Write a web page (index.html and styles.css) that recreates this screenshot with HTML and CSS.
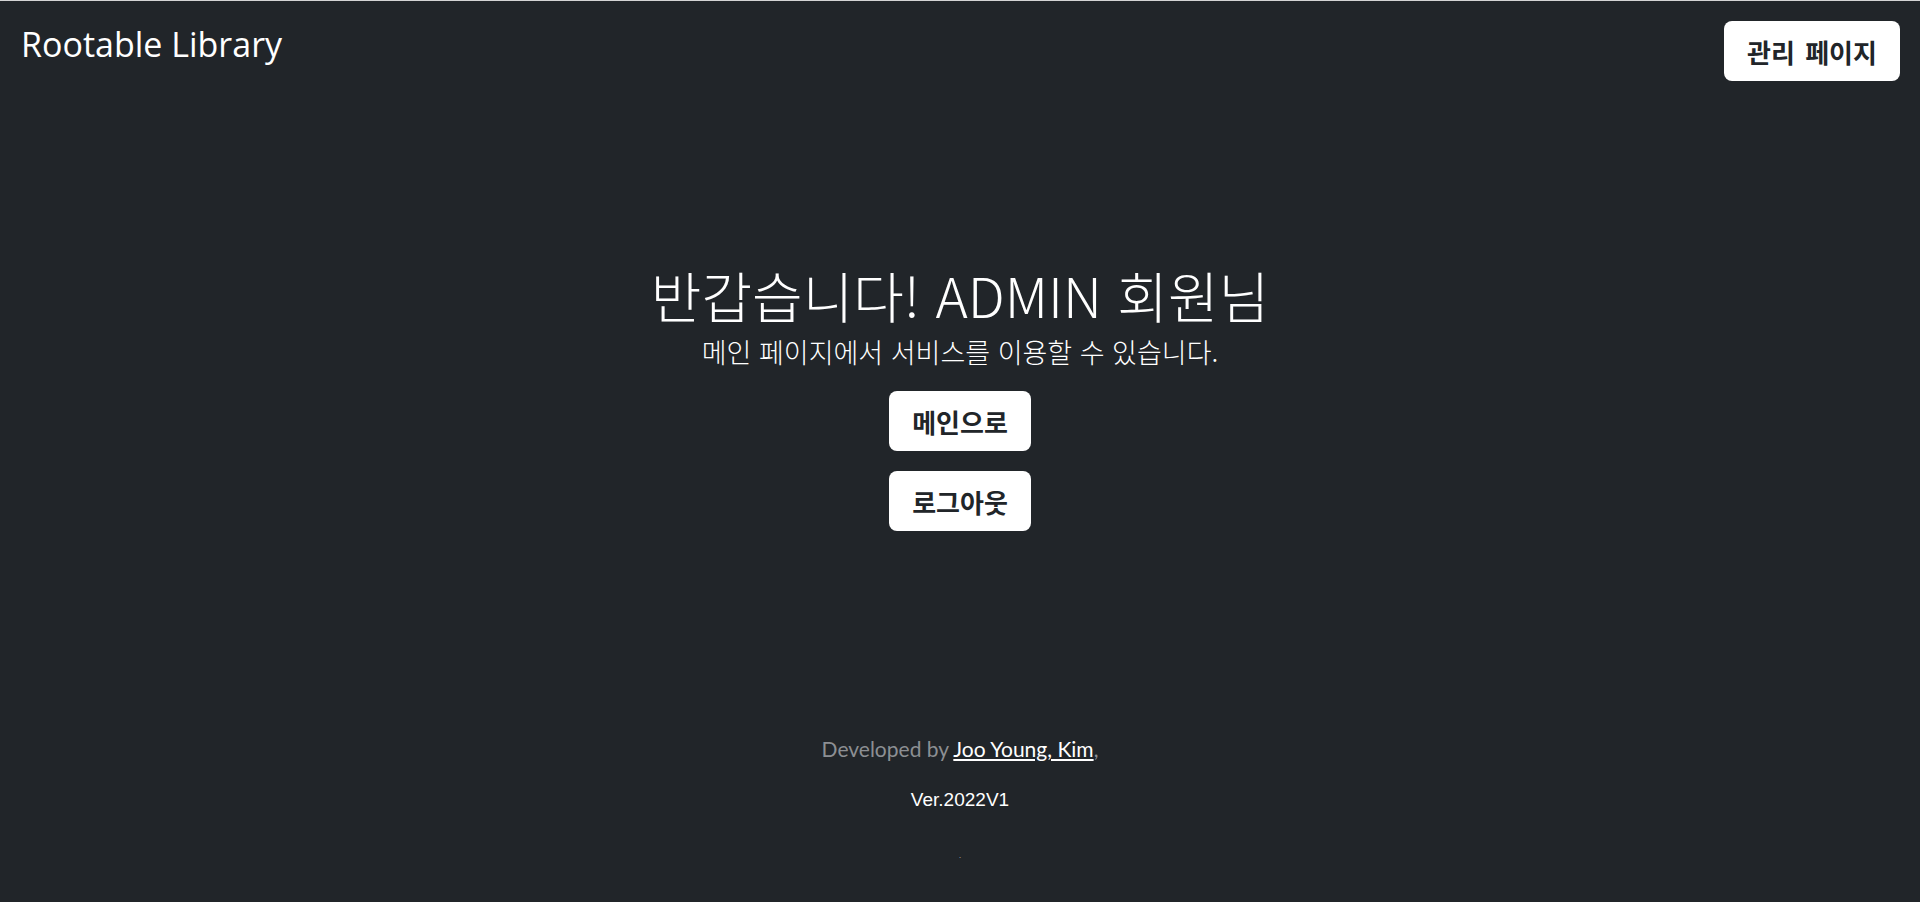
FILE: index.html
```html
<!DOCTYPE html>
<html lang="ko">
<head>
<meta charset="utf-8">
<title>Rootable Library</title>
<link rel="stylesheet" href="styles.css">
</head>
<body>
<header class="topbar">
  <div class="brand">Rootable Library</div>
  <button class="btn btn-admin">관리 페이지</button>
</header>
<main class="hero">
  <h1 class="hero-title">반갑습니다! ADMIN 회원님</h1>
  <p class="hero-sub">메인 페이지에서 서비스를 이용할 수 있습니다.</p>
  <div class="actions">
    <button class="btn btn-action">메인으로</button>
    <button class="btn btn-action">로그아웃</button>
  </div>
</main>
<footer class="footer">
  <p class="credit">Developed by <a class="author" href="#">Joo Young, Kim</a>,</p>
  <p class="version">Ver.2022V1</p>
  <p class="dot">.</p>
</footer>
</body>
</html>
```
FILE: styles.css
```css
html, body {
  margin: 0;
  padding: 0;
}
body {
  background: #212529;
  color: #ffffff;
  font-family: "Open Sans", "Noto Sans CJK KR", sans-serif;
  border-top: 1px solid #d4d4d4;
  height: 901px;
  overflow: hidden;
}
.topbar {
  display: flex;
  justify-content: space-between;
  align-items: flex-start;
  padding: 20px 20px 0 21px;
}
.brand {
  font-size: 34px;
  line-height: 46px;
  margin-top: 0;
  font-weight: 400;
}
.btn {
  background: #ffffff;
  color: #212529;
  border: none;
  border-radius: 8px;
  font-family: "Noto Sans CJK KR", sans-serif;
  font-weight: 700;
  font-size: 26px;
  height: 60px;
  cursor: pointer;
}
.btn-admin {
  width: 176px;
  padding: 0;
  word-spacing: 3px;
}
.hero {
  display: flex;
  flex-direction: column;
  align-items: center;
  padding-top: 180px;
}
.hero-title {
  margin: 0;
  font-family: "Noto Sans CJK KR", sans-serif;
  font-weight: 300;
  font-size: 55px;
  line-height: 66px;
}
.hero-sub {
  margin: 7px 0 0;
  font-family: "Noto Sans CJK KR", sans-serif;
  font-weight: 300;
  font-size: 27px;
  line-height: 36px;
}
.actions {
  display: flex;
  flex-direction: column;
  gap: 20px;
  margin-top: 21px;
}
.btn-action {
  width: 142px;
  padding: 0;
}
.footer {
  display: flex;
  flex-direction: column;
  align-items: center;
  margin-top: 203px;
}
.footer p {
  margin: 0;
}
.credit {
  font-family: "Lato", sans-serif;
  font-size: 21px;
  line-height: 30px;
  color: #8c8f93;
}
.author {
  color: #ffffff;
}
.footer .version {
  margin-top: 21px;
  font-family: "Liberation Sans", sans-serif;
  font-size: 19px;
  line-height: 30px;
  color: #ffffff;
}
.footer .dot {
  margin-top: 35px;
  font-size: 8px;
  line-height: 10px;
  color: #b0b0b0;
}
```
